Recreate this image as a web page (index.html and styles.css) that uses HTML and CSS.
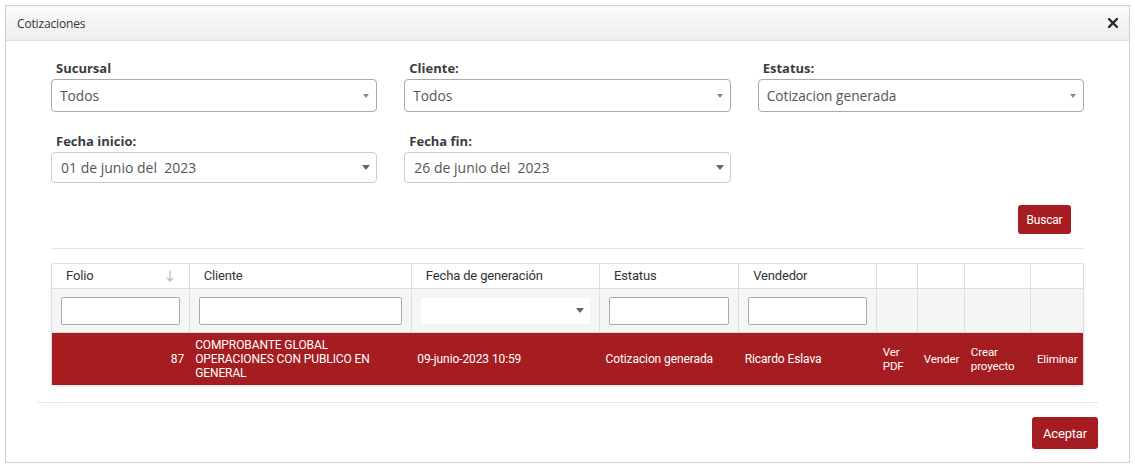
FILE: index.html
```html
<!DOCTYPE html>
<html lang="es">
<head>
<meta charset="utf-8">
<title>Cotizaciones</title>
<link rel="stylesheet" href="styles.css">
</head>
<body>
<div class="modal">
  <div class="modal-header">
    <span class="modal-title">Cotizaciones</span>
    <span class="close" aria-label="Cerrar">
      <svg width="10" height="10" viewBox="0 0 10 10"><path d="M1 1L9 9M9 1L1 9" stroke="#2b2b2b" stroke-width="2.4" stroke-linecap="square"/></svg>
    </span>
  </div>
  <div class="modal-body">
    <div class="inner">
      <div class="filters">
        <div class="field">
          <label class="label">Sucursal</label>
          <div class="select"><span>Todos</span><span class="caret small"></span></div>
        </div>
        <div class="field">
          <label class="label">Cliente:</label>
          <div class="select"><span>Todos</span><span class="caret small"></span></div>
        </div>
        <div class="field">
          <label class="label">Estatus:</label>
          <div class="select"><span>Cotizacion generada</span><span class="caret small"></span></div>
        </div>
        <div class="field">
          <label class="label">Fecha inicio:</label>
          <div class="select date"><span class="pre">01 de junio del  2023</span><span class="caret big"></span></div>
        </div>
        <div class="field">
          <label class="label">Fecha fin:</label>
          <div class="select date"><span class="pre">26 de junio del  2023</span><span class="caret big"></span></div>
        </div>
      </div>
      <div class="actions">
        <button class="btn btn-small">Buscar</button>
      </div>
      <hr class="sep">
      <div class="grid">
        <table>
          <colgroup>
            <col style="width:137px"><col style="width:222px"><col style="width:188px"><col style="width:139px"><col style="width:138px"><col style="width:41px"><col style="width:47px"><col style="width:66px"><col style="width:52px">
          </colgroup>
          <thead>
            <tr class="head">
              <th><div class="th-inner"><span>Folio</span>
                <svg class="sort" width="8" height="12" viewBox="0 0 8 12"><path d="M4 0.5V11M0.8 7.6L4 11L7.2 7.6" fill="none" stroke="#b8b8b8" stroke-width="1.2"/></svg></div></th>
              <th>Cliente</th>
              <th>Fecha de generación</th>
              <th>Estatus</th>
              <th>Vendedor</th>
              <th></th><th></th><th></th><th></th>
            </tr>
            <tr class="filter">
              <td><input class="finput" type="text"></td>
              <td><input class="finput" type="text"></td>
              <td><div class="fselect"><span class="caret big"></span></div></td>
              <td><input class="finput" type="text"></td>
              <td><input class="finput" type="text"></td>
              <td></td><td></td><td></td><td></td>
            </tr>
          </thead>
          <tbody>
            <tr class="row selected">
              <td class="num">87</td>
              <td>COMPROBANTE GLOBAL OPERACIONES CON PUBLICO EN GENERAL</td>
              <td>09-junio-2023 10:59</td>
              <td>Cotizacion generada</td>
              <td>Ricardo Eslava</td>
              <td class="act">Ver PDF</td>
              <td class="act">Vender</td>
              <td class="act">Crear proyecto</td>
              <td class="act">Eliminar</td>
            </tr>
          </tbody>
        </table>
      </div>
    </div>
  </div>
  <div class="modal-footer">
    <button class="btn btn-large">Aceptar</button>
  </div>
</div>
</body>
</html>
```

FILE: styles.css
```css
* { box-sizing: border-box; }
html, body { margin: 0; padding: 0; background: #fff; }
body { padding: 5px 0 0 5px; font-family: "Open Sans", "Liberation Sans", sans-serif; color: #333; }

.modal {
  width: 1125px;
  height: 458px;
  border: 1px solid #cfcfcf;
  background: #fff;
  display: flex;
  flex-direction: column;
}

.modal-header {
  height: 35px;
  border-bottom: 1px solid #dedede;
  background: linear-gradient(#fbfbfb, #eeeeee);
  display: flex;
  align-items: center;
  justify-content: space-between;
  padding: 0 11px 0 11px;
  flex: none;
}
.modal-title { font-size: 12px; color: #333; letter-spacing: -0.15px; }
.close { display: flex; width: 10px; height: 10px; }

.modal-body { padding: 0 31px 0 31px; flex: none; }
.inner { padding: 0 14px; }

.filters {
  padding-top: 18px;
  display: grid;
  grid-template-columns: 1fr 1fr 1fr;
  column-gap: 27px;
  row-gap: 20px;
}
.field { display: flex; flex-direction: column; }
.label {
  font-size: 13px;
  font-weight: 700;
  line-height: 18px;
  color: #3d3d3d;
  padding-left: 5px;
  margin-bottom: 2px;
}
.select {
  height: 33px;
  border: 1px solid #aaa;
  border-radius: 4px;
  display: flex;
  align-items: center;
  justify-content: space-between;
  padding: 0 6px 0 8px;
  font-size: 13.7px;
  color: #555;
}
.select.date {
  height: 31px;
  border-color: #ccc;
  padding-left: 9px;
  padding-right: 6px;
  font-size: 14px;
}
.pre { white-space: pre; }

.caret { display: inline-block; width: 0; height: 0; border-style: solid; border-color: transparent; }
.caret.small { border-width: 4px 3.5px 0 3.5px; border-top-color: #8a8a8a; margin-right: 1px; }
.caret.big { border-width: 5px 4.5px 0 4.5px; border-top-color: #666; }

.actions { display: flex; justify-content: flex-end; margin-top: 22px; padding-right: 13px; }
.btn {
  background: #a51c21;
  color: #fff;
  border: 0;
  border-radius: 3px;
  font-family: Roboto, "Liberation Sans", sans-serif;
  cursor: pointer;
  padding: 0;
}
.btn-small { width: 53px; height: 29px; font-size: 12px; letter-spacing: -0.2px; }
.btn-large { width: 66px; height: 32px; font-size: 13px; letter-spacing: -0.2px; }

.sep { border: 0; border-top: 1px solid #e5e5e5; margin: 14px 0 0 0; height: 0; }

.grid {
  margin-top: 14px;
  border: 1px solid #ddd;
  border-bottom: 0;
  border-radius: 3px 3px 0 0;
  overflow: hidden;
  box-shadow: 0 2px 3px rgba(0,0,0,0.08);
  font-family: Roboto, "Liberation Sans", sans-serif;
}
table { width: 100%; border-collapse: collapse; table-layout: fixed; }
th, td { padding: 0; }
.head th {
  height: 24px;
  font-size: 13px;
  font-weight: 400;
  color: #333;
  text-align: left;
  padding: 0 13px 0 14px;
  border-left: 1px solid #ddd;
  border-bottom: 1px solid #ddd;
  background: #fff;
  letter-spacing: -0.15px;
}
.head th:first-child { border-left: 0; }
.th-inner { display: flex; justify-content: space-between; align-items: center; padding-right: 2px; }
.sort { display: block; }

.filter td {
  height: 44px;
  background: #f5f5f5;
  border-left: 1px solid #ddd;
  border-bottom: 1px solid #ddd;
  padding: 0 9px;
  vertical-align: middle;
}
.filter td:first-child { border-left: 0; }
.finput {
  display: block;
  width: 100%;
  height: 28px;
  border: 1px solid #aaa;
  border-radius: 2px;
  background: #fff;
  margin: 0;
  margin-top: 1px;
}
.fselect {
  height: 26px;
  background: #fff;
  display: flex;
  align-items: center;
  justify-content: flex-end;
  padding-right: 6px;
  margin-top: 1px;
}

.row td {
  height: 53px;
  background: #a51c21;
  color: #fff;
  font-size: 12px;
  line-height: 14px;
  padding: 0 6px;
  vertical-align: middle;
  letter-spacing: -0.1px;
}
.row td.num { text-align: right; padding-right: 5px; }
.row td.act { padding: 0 4px 0 6px; font-size: 11.6px; letter-spacing: -0.15px; }

.modal-footer {
  margin: auto 31px 0 31px;
  border-top: 1px solid #e5e5e5;
  padding: 14px 0 13px 0;
  display: flex;
  justify-content: flex-end;
  flex: none;
}
```
